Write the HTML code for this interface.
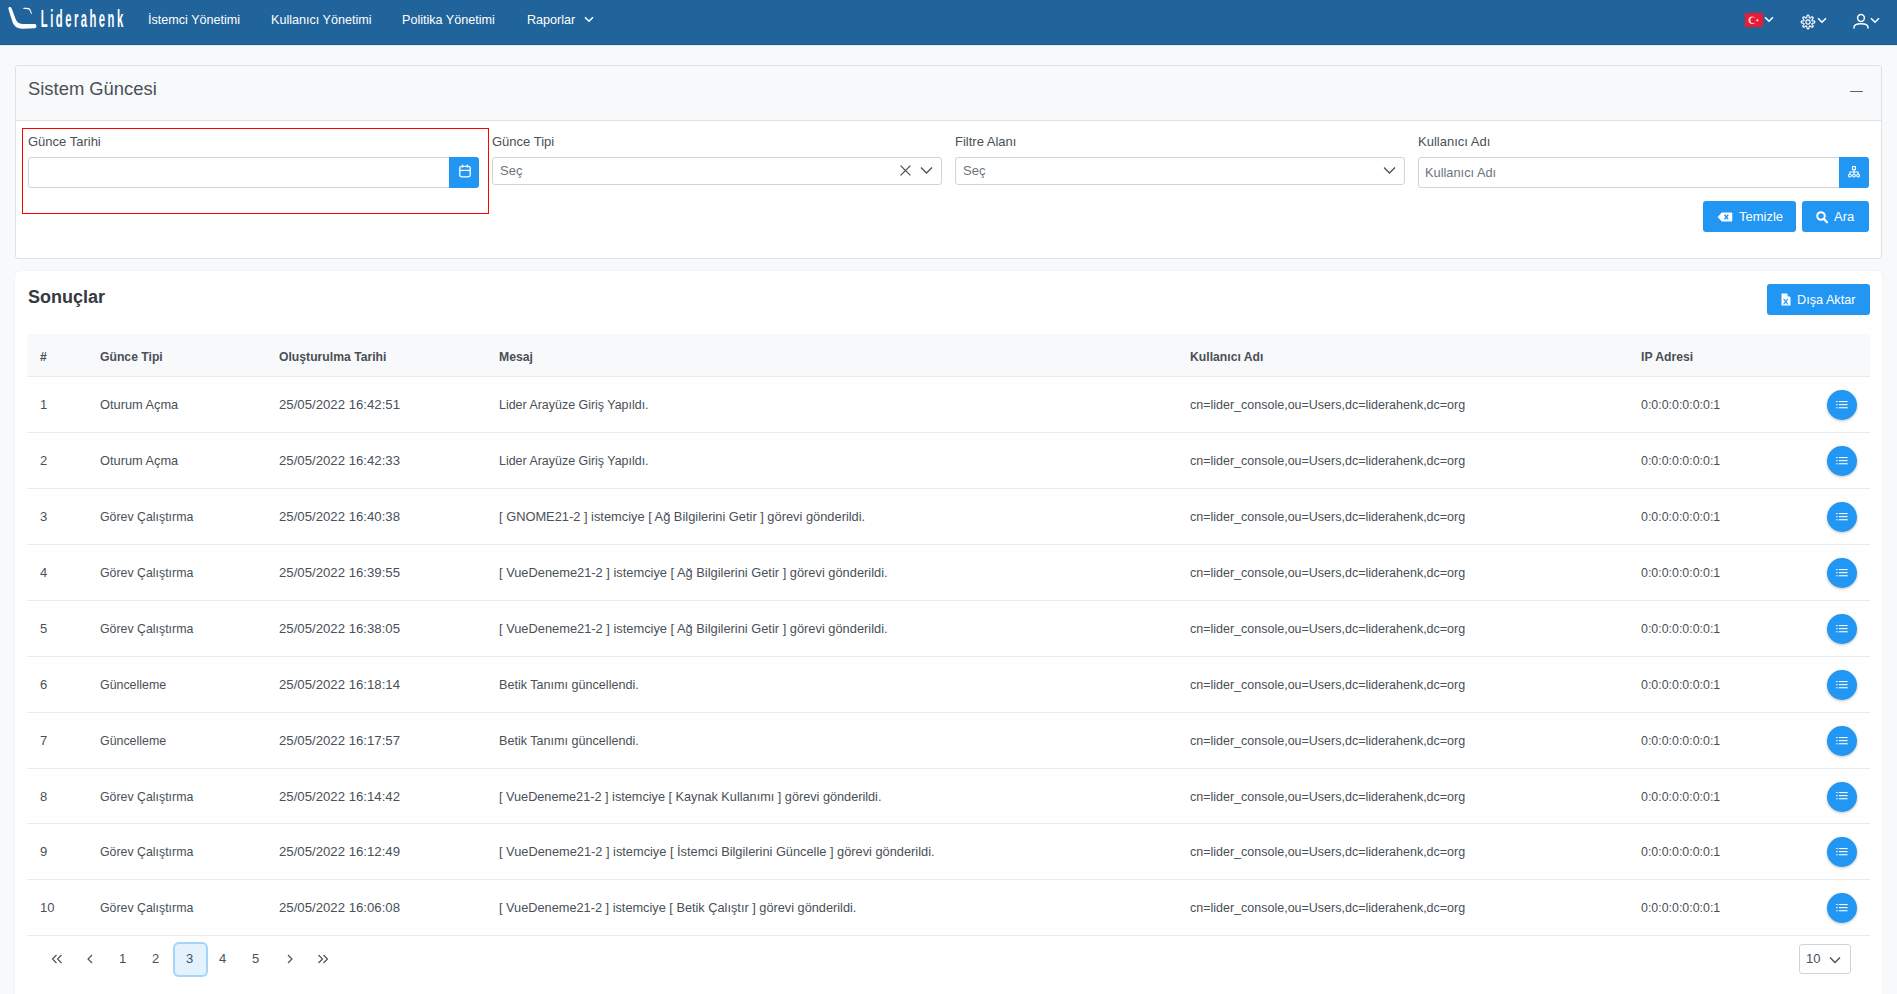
<!DOCTYPE html>
<html lang="tr">
<head>
<meta charset="utf-8">
<title>Sistem Güncesi</title>
<style>
*{box-sizing:border-box;}
html,body{margin:0;padding:0;}
body{width:1897px;height:994px;overflow:hidden;background:#f8f9fa;font-family:"Liberation Sans",sans-serif;color:#495057;position:relative;}
.topbar{position:absolute;left:0;top:0;width:1897px;height:45px;background:#21639b;border-bottom:1px solid #195c96;box-shadow:0 1px 1px rgba(0,0,0,.06);}
.logo{position:absolute;left:7px;top:5px;}
.nav{position:absolute;top:0px;height:44px;line-height:40px;font-size:12.6px;color:#fff;white-space:nowrap;}
.ricon{position:absolute;}
.panel{position:absolute;left:15px;top:65px;width:1867px;height:194px;border:1px solid #dee2e6;border-radius:3px;background:#fff;}
.panel-h{position:absolute;left:0;top:0;width:100%;height:55px;background:#f8f9fa;border-bottom:1px solid #dee2e6;border-radius:3px 3px 0 0;}
.panel-t{position:absolute;left:12px;top:12px;font-size:18.4px;color:#495057;line-height:22px;}
.minus{position:absolute;left:1834px;top:24.6px;width:13px;height:1.5px;background:#5a636b;border-radius:1px;}
.lbl{position:absolute;top:134px;font-size:13px;line-height:16px;color:#495057;white-space:nowrap;}
.inp{position:absolute;background:#fff;border:1px solid #ced4da;border-radius:3px;}
.sel-t{position:absolute;left:7px;top:5px;font-size:13px;color:#6c757d;line-height:16px;}
.bbtn{position:absolute;background:#2196f3;border-radius:3px;color:#fff;}
.redbox{position:absolute;left:22px;top:128px;width:467px;height:86px;border:1px solid #ff0000;}
.card{position:absolute;left:15px;top:271px;width:1867px;height:740px;background:#fff;border-radius:4px;box-shadow:0 0 1px rgba(0,0,0,.18);}
.card-t{position:absolute;left:13px;top:15px;font-size:18px;font-weight:bold;color:#343a40;line-height:22px;}
.tbl{position:absolute;left:27px;top:334px;width:1843px;border-collapse:collapse;table-layout:fixed;}
.tbl th{height:42px;background:#f8f9fa;border-bottom:1px solid #e9ecef;font-size:12.2px;font-weight:bold;text-align:left;padding:4px 0 0 13px;color:#495057;}
.tbl td{height:56px;line-height:16px;border-bottom:1px solid #e9ecef;font-size:12.6px;padding:2px 0 0 13px;color:#495057;white-space:nowrap;}
.tbl td.ipc{position:relative;font-size:12.4px;}
.tbl td:nth-child(1){font-size:13px}.tbl td:nth-child(2){font-size:12.5px}.tbl td:nth-child(3){font-size:13.2px}.tbl td:nth-child(4){font-size:12.7px}.tbl td:nth-child(5){font-size:12.5px}
.ip{position:absolute;left:13px;top:calc(50% + 1px);transform:translateY(-50%);line-height:16px;}
.rb{position:absolute;right:13px;top:50%;margin-top:-14px;width:30px;height:30px;border-radius:50%;background:#2196f3;box-shadow:0 1px 3px rgba(0,0,0,.25);display:flex;align-items:center;justify-content:center;}
.pg{position:absolute;top:951px;font-size:13px;color:#495057;}
.tbl tbody tr:nth-child(8) td{height:55px}
</style>
</head>
<body>
<div class="topbar">
  <svg style="position:absolute;left:0;top:0" width="130" height="45" viewBox="0 0 130 45">
 <path d="M8.4 8.4 C8.2 7.2 9.6 6.4 10.8 7.2 C11.6 7.8 11.9 8.8 12.3 10 L15.4 18.6 C16.6 21.8 18.6 23.9 22.6 24.1 L34.6 24.1 C36 24.2 36.6 25.2 36.4 26.4 C36.2 27.6 35.4 28.1 34.2 28.2 L22.8 28.8 C17.8 29 14.8 27 12.6 22.6 L8.8 10.2 C8.6 9.5 8.5 9 8.4 8.4 Z" fill="#fff"/>
 <path d="M23.2 8.1 C23.8 7.8 25 7.8 28.4 8 C29.6 8.1 30.2 8.8 30.8 10.4 L31.9 13.6 L31.3 14.2 L29.6 10.6 C29.1 9.6 28.6 9.3 27.6 9.2 L23.2 8.7 Z" fill="#fff"/>
 <g transform="translate(40.8,27.1) scale(0.46,1)"><text x="0" y="0" font-family="Liberation Sans" font-weight="bold" font-size="24.5" fill="#fff" letter-spacing="5.4">Liderahenk</text></g>
</svg>
  <div class="nav" style="left:148px">İstemci Yönetimi</div>
  <div class="nav" style="left:271px">Kullanıcı Yönetimi</div>
  <div class="nav" style="left:402px">Politika Yönetimi</div>
  <div class="nav" style="left:527px">Raporlar</div>
  <svg class="ricon" style="left:584px;top:16px" width="10" height="7" viewBox="0 0 10 7"><path d="M1 1.2 L5 5.2 L9 1.2" fill="none" stroke="#fff" stroke-width="1.6"/></svg>
  <!-- flag -->
  <svg class="ricon" style="left:1745px;top:13px" width="18" height="14" viewBox="0 0 18 14"><rect width="18" height="14" fill="#ec1a32"/><circle cx="7.2" cy="7.2" r="3.7" fill="#ffd6da"/><circle cx="8.3" cy="7.2" r="2.9" fill="#ec1a32"/><circle cx="12.4" cy="7.3" r="1.1" fill="#ffe6e8"/></svg>
  <svg class="ricon" style="left:1764px;top:16px" width="10" height="7" viewBox="0 0 10 7"><path d="M1 1.2 L5 5.2 L9 1.2" fill="none" stroke="#fff" stroke-width="1.6"/></svg>
  <!-- gear -->
  <svg class="ricon" style="left:1799px;top:12.5px" width="18" height="18" viewBox="0 0 18 18"><path d="M9.00 2.15 L9.27 2.19 L9.53 2.32 L9.77 2.54 L9.97 2.86 L10.09 3.51 L10.16 4.16 L10.27 4.48 L10.39 4.72 L10.52 4.88 L10.66 4.98 L10.84 5.02 L11.04 4.99 L11.29 4.91 L11.60 4.75 L12.11 4.34 L12.65 3.97 L13.03 3.89 L13.35 3.90 L13.62 4.00 L13.84 4.16 L14.00 4.38 L14.10 4.65 L14.11 4.97 L14.03 5.35 L13.66 5.89 L13.25 6.40 L13.09 6.71 L13.01 6.96 L12.98 7.16 L13.02 7.34 L13.12 7.48 L13.28 7.61 L13.52 7.73 L13.84 7.84 L14.49 7.91 L15.14 8.03 L15.46 8.23 L15.68 8.47 L15.81 8.73 L15.85 9.00 L15.81 9.27 L15.68 9.53 L15.46 9.77 L15.14 9.97 L14.49 10.09 L13.84 10.16 L13.52 10.27 L13.28 10.39 L13.12 10.52 L13.02 10.66 L12.98 10.84 L13.01 11.04 L13.09 11.29 L13.25 11.60 L13.66 12.11 L14.03 12.65 L14.11 13.03 L14.10 13.35 L14.00 13.62 L13.84 13.84 L13.62 14.00 L13.35 14.10 L13.03 14.11 L12.65 14.03 L12.11 13.66 L11.60 13.25 L11.29 13.09 L11.04 13.01 L10.84 12.98 L10.66 13.02 L10.52 13.12 L10.39 13.28 L10.27 13.52 L10.16 13.84 L10.09 14.49 L9.97 15.14 L9.77 15.46 L9.53 15.68 L9.27 15.81 L9.00 15.85 L8.73 15.81 L8.47 15.68 L8.23 15.46 L8.03 15.14 L7.91 14.49 L7.84 13.84 L7.73 13.52 L7.61 13.28 L7.48 13.12 L7.34 13.02 L7.16 12.98 L6.96 13.01 L6.71 13.09 L6.40 13.25 L5.89 13.66 L5.35 14.03 L4.97 14.11 L4.65 14.10 L4.38 14.00 L4.16 13.84 L4.00 13.62 L3.90 13.35 L3.89 13.03 L3.97 12.65 L4.34 12.11 L4.75 11.60 L4.91 11.29 L4.99 11.04 L5.02 10.84 L4.98 10.66 L4.88 10.52 L4.72 10.39 L4.48 10.27 L4.16 10.16 L3.51 10.09 L2.86 9.97 L2.54 9.77 L2.32 9.53 L2.19 9.27 L2.15 9.00 L2.19 8.73 L2.32 8.47 L2.54 8.23 L2.86 8.03 L3.51 7.91 L4.16 7.84 L4.48 7.73 L4.72 7.61 L4.88 7.48 L4.98 7.34 L5.02 7.16 L4.99 6.96 L4.91 6.71 L4.75 6.40 L4.34 5.89 L3.97 5.35 L3.89 4.97 L3.90 4.65 L4.00 4.38 L4.16 4.16 L4.38 4.00 L4.65 3.90 L4.97 3.89 L5.35 3.97 L5.89 4.34 L6.40 4.75 L6.71 4.91 L6.96 4.99 L7.16 5.02 L7.34 4.98 L7.48 4.88 L7.61 4.72 L7.73 4.48 L7.84 4.16 L7.91 3.51 L8.03 2.86 L8.23 2.54 L8.47 2.32 L8.73 2.19Z" fill="none" stroke="#fff" stroke-width="1.2"/><circle cx="9" cy="9" r="2.1" fill="none" stroke="#fff" stroke-width="1.2"/></svg>
  <svg class="ricon" style="left:1817px;top:17px" width="10" height="7" viewBox="0 0 10 7"><path d="M1 1.2 L5 5.2 L9 1.2" fill="none" stroke="#fff" stroke-width="1.6"/></svg>
  <!-- user -->
  <svg class="ricon" style="left:1852px;top:13px" width="18" height="17" viewBox="0 0 18 17"><circle cx="9" cy="5" r="3.4" fill="none" stroke="#fff" stroke-width="1.5"/><path d="M2 15 V14.2 C2 11.6 4.2 10.7 9 10.7 C13.8 10.7 16 11.6 16 14.2 V15" fill="none" stroke="#fff" stroke-width="1.5" stroke-linecap="round"/></svg>
  <svg class="ricon" style="left:1870px;top:17px" width="10" height="7" viewBox="0 0 10 7"><path d="M1 1.2 L5 5.2 L9 1.2" fill="none" stroke="#fff" stroke-width="1.6"/></svg>
</div>

<div class="panel">
  <div class="panel-h"><div class="panel-t">Sistem Güncesi</div><div class="minus"></div></div>
</div>

<div class="redbox"></div>
<div class="lbl" style="left:28px">Günce Tarihi</div>
<div class="lbl" style="left:492px">Günce Tipi</div>
<div class="lbl" style="left:955px">Filtre Alanı</div>
<div class="lbl" style="left:1418px">Kullanıcı Adı</div>

<!-- date input -->
<div class="inp" style="left:28px;top:157px;width:422px;height:31px;border-radius:3px 0 0 3px;"></div>
<div class="bbtn" style="left:449px;top:157px;width:30px;height:31px;border-radius:0 3px 3px 0;">
  <svg style="position:absolute;left:10px;top:7px" width="12" height="14" viewBox="0 0 12 14"><rect x="0.8" y="2.3" width="10.4" height="10.5" rx="1.8" fill="none" stroke="#fff" stroke-width="1.3"/><line x1="0.8" y1="6.4" x2="11.2" y2="6.4" stroke="#fff" stroke-width="1.3"/><line x1="3.6" y1="0.6" x2="3.6" y2="3.6" stroke="#fff" stroke-width="1.3"/><line x1="8.4" y1="0.6" x2="8.4" y2="3.6" stroke="#fff" stroke-width="1.3"/></svg>
</div>

<!-- gunce tipi dropdown -->
<div class="inp" style="left:492px;top:157px;width:450px;height:28px;">
  <div class="sel-t">Seç</div>
  <svg style="position:absolute;left:407px;top:7px" width="11" height="11" viewBox="0 0 11 11"><path d="M0.6 0.6 L10.4 10.4 M10.4 0.6 L0.6 10.4" stroke="#495057" stroke-width="1.3"/></svg>
  <svg style="position:absolute;left:427px;top:8px" width="13" height="9" viewBox="0 0 13 9"><path d="M1 1.5 L6.5 7 L12 1.5" fill="none" stroke="#495057" stroke-width="1.3"/></svg>
</div>
<!-- filtre alani -->
<div class="inp" style="left:955px;top:157px;width:450px;height:28px;">
  <div class="sel-t">Seç</div>
  <svg style="position:absolute;left:427px;top:8px" width="13" height="9" viewBox="0 0 13 9"><path d="M1 1.5 L6.5 7 L12 1.5" fill="none" stroke="#495057" stroke-width="1.3"/></svg>
</div>
<!-- kullanici adi -->
<div class="inp" style="left:1418px;top:157px;width:422px;height:31px;border-radius:3px 0 0 3px;">
  <div class="sel-t" style="left:6px;top:7px;color:#6c757d;font-size:12.8px">Kullanıcı Adı</div>
</div>
<div class="bbtn" style="left:1839px;top:157px;width:30px;height:31px;border-radius:0 3px 3px 0;">
  <svg style="position:absolute;left:9px;top:9px" width="12" height="12" viewBox="0 0 12 12"><g fill="none" stroke="#fff" stroke-width="1.1"><rect x="4.5" y="0.6" width="3" height="3"/><circle cx="1.9" cy="9.6" r="1.4"/><circle cx="6" cy="9.6" r="1.4"/><circle cx="10.1" cy="9.6" r="1.4"/><path d="M6 3.6 V8.2 M1.9 8.2 V6 H10.1 V8.2"/></g></svg>
</div>

<!-- buttons -->
<div class="bbtn" style="left:1703px;top:201px;width:93px;height:31px;">
  <svg style="position:absolute;left:14px;top:10.5px" width="16" height="10" viewBox="0 0 17 11"><path d="M5 0.5 H15.5 C16.1 0.5 16.5 0.9 16.5 1.5 V9.5 C16.5 10.1 16.1 10.5 15.5 10.5 H5 L0.3 5.5 Z" fill="#fff"/><path d="M8 3 L12 8 M12 3 L8 8" stroke="#2196f3" stroke-width="1.6"/></svg>
  <span style="position:absolute;left:36px;top:8px;font-size:13px;line-height:16px;">Temizle</span>
</div>
<div class="bbtn" style="left:1802px;top:201px;width:67px;height:31px;">
  <svg style="position:absolute;left:14px;top:10px" width="12" height="13" viewBox="0 0 12 13"><circle cx="5" cy="5" r="3.8" fill="none" stroke="#fff" stroke-width="2"/><path d="M7.8 7.8 L11 11.2" stroke="#fff" stroke-width="2.2" stroke-linecap="round"/></svg>
  <span style="position:absolute;left:32px;top:8px;font-size:13px;line-height:16px;">Ara</span>
</div>

<div class="card">
  <div class="card-t">Sonuçlar</div>
</div>
<div class="bbtn" style="left:1767px;top:284px;width:103px;height:31px;">
  <svg style="position:absolute;left:14px;top:9px" width="10" height="13" viewBox="0 0 10 13"><path d="M0.5 0.5 H6 L9.5 4 V12.5 H0.5 Z" fill="#fff"/><path d="M6.6 0.5 L9.5 3.4 H6.6 Z" fill="#2196f3"/><path d="M2.6 5.8 L6.8 11.4 M6.8 5.8 L2.6 11.4" stroke="#2196f3" stroke-width="1.1"/></svg>
  <span style="position:absolute;left:30px;top:8px;font-size:12.7px;line-height:16px;">Dışa Aktar</span>
</div>

<table class="tbl">
<colgroup><col style="width:60px"><col style="width:179px"><col style="width:220px"><col style="width:691px"><col style="width:451px"><col style="width:242px"></colgroup>
<thead><tr><th>#</th><th>Günce Tipi</th><th>Oluşturulma Tarihi</th><th>Mesaj</th><th>Kullanıcı Adı</th><th>IP Adresi</th></tr></thead>
<tbody>
<tr><td>1</td><td style="font-size:12.8px">Oturum Açma</td><td>25/05/2022 16:42:51</td><td style="font-size:12.45px">Lider Arayüze Giriş Yapıldı.</td><td>cn=lider_console,ou=Users,dc=liderahenk,dc=org</td><td class="ipc"><span class="ip">0:0:0:0:0:0:0:1</span><span class="rb"><svg width="12" height="9" viewBox="0 0 12 9" style="margin:-2px 0 0 -1px"><g fill="#fff"><rect x="0.2" y="1" width="1.4" height="1.1"/><rect x="2.8" y="1" width="8.8" height="1.1"/><rect x="0.2" y="4.1" width="1.4" height="1.1"/><rect x="2.8" y="4.1" width="8.8" height="1.1"/><rect x="0.2" y="7.2" width="1.4" height="1.1"/><rect x="2.8" y="7.2" width="8.8" height="1.1"/></g></svg></span></td></tr>
<tr><td>2</td><td style="font-size:12.8px">Oturum Açma</td><td>25/05/2022 16:42:33</td><td style="font-size:12.45px">Lider Arayüze Giriş Yapıldı.</td><td>cn=lider_console,ou=Users,dc=liderahenk,dc=org</td><td class="ipc"><span class="ip">0:0:0:0:0:0:0:1</span><span class="rb"><svg width="12" height="9" viewBox="0 0 12 9" style="margin:-2px 0 0 -1px"><g fill="#fff"><rect x="0.2" y="1" width="1.4" height="1.1"/><rect x="2.8" y="1" width="8.8" height="1.1"/><rect x="0.2" y="4.1" width="1.4" height="1.1"/><rect x="2.8" y="4.1" width="8.8" height="1.1"/><rect x="0.2" y="7.2" width="1.4" height="1.1"/><rect x="2.8" y="7.2" width="8.8" height="1.1"/></g></svg></span></td></tr>
<tr><td>3</td><td style="font-size:12.35px">Görev Çalıştırma</td><td>25/05/2022 16:40:38</td><td style="font-size:12.85px">[ GNOME21-2 ] istemciye [ Ağ Bilgilerini Getir ] görevi gönderildi.</td><td>cn=lider_console,ou=Users,dc=liderahenk,dc=org</td><td class="ipc"><span class="ip">0:0:0:0:0:0:0:1</span><span class="rb"><svg width="12" height="9" viewBox="0 0 12 9" style="margin:-2px 0 0 -1px"><g fill="#fff"><rect x="0.2" y="1" width="1.4" height="1.1"/><rect x="2.8" y="1" width="8.8" height="1.1"/><rect x="0.2" y="4.1" width="1.4" height="1.1"/><rect x="2.8" y="4.1" width="8.8" height="1.1"/><rect x="0.2" y="7.2" width="1.4" height="1.1"/><rect x="2.8" y="7.2" width="8.8" height="1.1"/></g></svg></span></td></tr>
<tr><td>4</td><td style="font-size:12.35px">Görev Çalıştırma</td><td>25/05/2022 16:39:55</td><td style="font-size:12.85px">[ VueDeneme21-2 ] istemciye [ Ağ Bilgilerini Getir ] görevi gönderildi.</td><td>cn=lider_console,ou=Users,dc=liderahenk,dc=org</td><td class="ipc"><span class="ip">0:0:0:0:0:0:0:1</span><span class="rb"><svg width="12" height="9" viewBox="0 0 12 9" style="margin:-2px 0 0 -1px"><g fill="#fff"><rect x="0.2" y="1" width="1.4" height="1.1"/><rect x="2.8" y="1" width="8.8" height="1.1"/><rect x="0.2" y="4.1" width="1.4" height="1.1"/><rect x="2.8" y="4.1" width="8.8" height="1.1"/><rect x="0.2" y="7.2" width="1.4" height="1.1"/><rect x="2.8" y="7.2" width="8.8" height="1.1"/></g></svg></span></td></tr>
<tr><td>5</td><td style="font-size:12.35px">Görev Çalıştırma</td><td>25/05/2022 16:38:05</td><td style="font-size:12.85px">[ VueDeneme21-2 ] istemciye [ Ağ Bilgilerini Getir ] görevi gönderildi.</td><td>cn=lider_console,ou=Users,dc=liderahenk,dc=org</td><td class="ipc"><span class="ip">0:0:0:0:0:0:0:1</span><span class="rb"><svg width="12" height="9" viewBox="0 0 12 9" style="margin:-2px 0 0 -1px"><g fill="#fff"><rect x="0.2" y="1" width="1.4" height="1.1"/><rect x="2.8" y="1" width="8.8" height="1.1"/><rect x="0.2" y="4.1" width="1.4" height="1.1"/><rect x="2.8" y="4.1" width="8.8" height="1.1"/><rect x="0.2" y="7.2" width="1.4" height="1.1"/><rect x="2.8" y="7.2" width="8.8" height="1.1"/></g></svg></span></td></tr>
<tr><td>6</td><td style="font-size:12.4px">Güncelleme</td><td>25/05/2022 16:18:14</td><td style="font-size:12.6px">Betik Tanımı güncellendi.</td><td>cn=lider_console,ou=Users,dc=liderahenk,dc=org</td><td class="ipc"><span class="ip">0:0:0:0:0:0:0:1</span><span class="rb"><svg width="12" height="9" viewBox="0 0 12 9" style="margin:-2px 0 0 -1px"><g fill="#fff"><rect x="0.2" y="1" width="1.4" height="1.1"/><rect x="2.8" y="1" width="8.8" height="1.1"/><rect x="0.2" y="4.1" width="1.4" height="1.1"/><rect x="2.8" y="4.1" width="8.8" height="1.1"/><rect x="0.2" y="7.2" width="1.4" height="1.1"/><rect x="2.8" y="7.2" width="8.8" height="1.1"/></g></svg></span></td></tr>
<tr><td>7</td><td style="font-size:12.4px">Güncelleme</td><td>25/05/2022 16:17:57</td><td style="font-size:12.6px">Betik Tanımı güncellendi.</td><td>cn=lider_console,ou=Users,dc=liderahenk,dc=org</td><td class="ipc"><span class="ip">0:0:0:0:0:0:0:1</span><span class="rb"><svg width="12" height="9" viewBox="0 0 12 9" style="margin:-2px 0 0 -1px"><g fill="#fff"><rect x="0.2" y="1" width="1.4" height="1.1"/><rect x="2.8" y="1" width="8.8" height="1.1"/><rect x="0.2" y="4.1" width="1.4" height="1.1"/><rect x="2.8" y="4.1" width="8.8" height="1.1"/><rect x="0.2" y="7.2" width="1.4" height="1.1"/><rect x="2.8" y="7.2" width="8.8" height="1.1"/></g></svg></span></td></tr>
<tr><td>8</td><td style="font-size:12.35px">Görev Çalıştırma</td><td>25/05/2022 16:14:42</td><td style="font-size:12.7px">[ VueDeneme21-2 ] istemciye [ Kaynak Kullanımı ] görevi gönderildi.</td><td>cn=lider_console,ou=Users,dc=liderahenk,dc=org</td><td class="ipc"><span class="ip">0:0:0:0:0:0:0:1</span><span class="rb"><svg width="12" height="9" viewBox="0 0 12 9" style="margin:-2px 0 0 -1px"><g fill="#fff"><rect x="0.2" y="1" width="1.4" height="1.1"/><rect x="2.8" y="1" width="8.8" height="1.1"/><rect x="0.2" y="4.1" width="1.4" height="1.1"/><rect x="2.8" y="4.1" width="8.8" height="1.1"/><rect x="0.2" y="7.2" width="1.4" height="1.1"/><rect x="2.8" y="7.2" width="8.8" height="1.1"/></g></svg></span></td></tr>
<tr><td>9</td><td style="font-size:12.35px">Görev Çalıştırma</td><td>25/05/2022 16:12:49</td><td style="font-size:12.8px">[ VueDeneme21-2 ] istemciye [ İstemci Bilgilerini Güncelle ] görevi gönderildi.</td><td>cn=lider_console,ou=Users,dc=liderahenk,dc=org</td><td class="ipc"><span class="ip">0:0:0:0:0:0:0:1</span><span class="rb"><svg width="12" height="9" viewBox="0 0 12 9" style="margin:-2px 0 0 -1px"><g fill="#fff"><rect x="0.2" y="1" width="1.4" height="1.1"/><rect x="2.8" y="1" width="8.8" height="1.1"/><rect x="0.2" y="4.1" width="1.4" height="1.1"/><rect x="2.8" y="4.1" width="8.8" height="1.1"/><rect x="0.2" y="7.2" width="1.4" height="1.1"/><rect x="2.8" y="7.2" width="8.8" height="1.1"/></g></svg></span></td></tr>
<tr><td>10</td><td style="font-size:12.35px">Görev Çalıştırma</td><td>25/05/2022 16:06:08</td><td style="font-size:12.75px">[ VueDeneme21-2 ] istemciye [ Betik Çalıştır ] görevi gönderildi.</td><td>cn=lider_console,ou=Users,dc=liderahenk,dc=org</td><td class="ipc"><span class="ip">0:0:0:0:0:0:0:1</span><span class="rb"><svg width="12" height="9" viewBox="0 0 12 9" style="margin:-2px 0 0 -1px"><g fill="#fff"><rect x="0.2" y="1" width="1.4" height="1.1"/><rect x="2.8" y="1" width="8.8" height="1.1"/><rect x="0.2" y="4.1" width="1.4" height="1.1"/><rect x="2.8" y="4.1" width="8.8" height="1.1"/><rect x="0.2" y="7.2" width="1.4" height="1.1"/><rect x="2.8" y="7.2" width="8.8" height="1.1"/></g></svg></span></td></tr>
</tbody>
</table>

<!-- paginator -->
<svg style="position:absolute;left:51px;top:954px" width="12" height="10" viewBox="0 0 12 10"><path d="M5.5 1 L1.5 5 L5.5 9 M10.5 1 L6.5 5 L10.5 9" fill="none" stroke="#495057" stroke-width="1.15"/></svg>
<svg style="position:absolute;left:86px;top:954px" width="8" height="10" viewBox="0 0 8 10"><path d="M6 1 L2 5 L6 9" fill="none" stroke="#495057" stroke-width="1.15"/></svg>
<div class="pg" style="left:119px">1</div>
<div class="pg" style="left:152px">2</div>
<div style="position:absolute;left:172.5px;top:941.5px;width:35px;height:35px;background:#e3f2fd;border-radius:6px;box-shadow:inset 0 0 0 2px #a6d5fa;"></div>
<div class="pg" style="left:186px">3</div>
<div class="pg" style="left:219px">4</div>
<div class="pg" style="left:252px">5</div>
<svg style="position:absolute;left:286px;top:954px" width="8" height="10" viewBox="0 0 8 10"><path d="M2 1 L6 5 L2 9" fill="none" stroke="#495057" stroke-width="1.15"/></svg>
<svg style="position:absolute;left:317px;top:954px" width="12" height="10" viewBox="0 0 12 10"><path d="M1.5 1 L5.5 5 L1.5 9 M6.5 1 L10.5 5 L6.5 9" fill="none" stroke="#495057" stroke-width="1.15"/></svg>
<div class="inp" style="left:1799px;top:944px;width:52px;height:30px;">
  <div class="sel-t" style="left:6px;top:6px;color:#495057">10</div>
  <svg style="position:absolute;left:29px;top:11px" width="12" height="8" viewBox="0 0 12 8"><path d="M1 1.5 L6 6.5 L11 1.5" fill="none" stroke="#495057" stroke-width="1.4"/></svg>
</div>
</body>
</html>
